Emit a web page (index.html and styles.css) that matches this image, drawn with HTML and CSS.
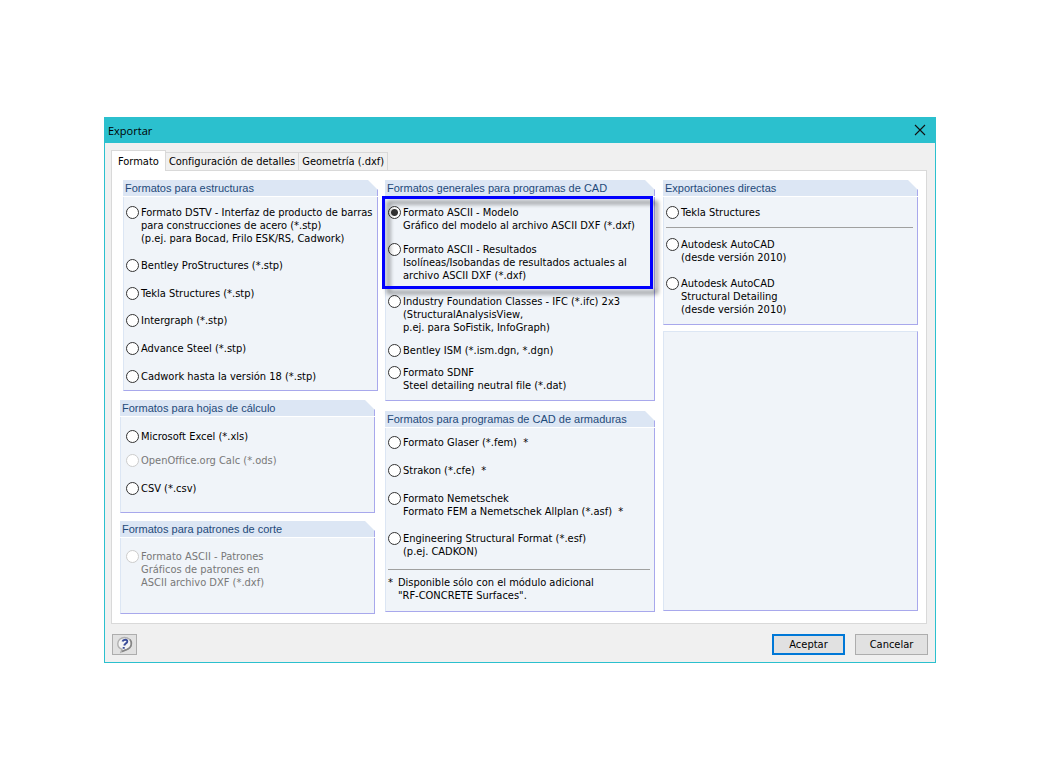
FILE: index.html
```html
<!DOCTYPE html>
<html lang="es">
<head>
    <meta charset="UTF-8">
    <meta name="viewport" content="width=device-width, initial-scale=1.0">
    <title>Exportar</title>
    <link rel="stylesheet" href="styles.css">
</head>
<body>
    <div class="window">
        <div class="title-bar">
            <h1>Exportar</h1>
            <button type="button" class="close" aria-label="Cerrar">
                <svg width="12" height="12" viewBox="0 0 12 12"><path d="M1 1L11 11M11 1L1 11" stroke="#111" stroke-width="1.1" fill="none"/></svg>
            </button>
        </div>

        <div class="tabs">
            <button type="button" class="tab active">Formato</button>
            <button type="button" class="tab">Configuración de detalles</button>
            <button type="button" class="tab">Geometría (.dxf)</button>
        </div>

        <form class="panel" id="export-form">
            <div class="column">
                <section class="group structures">
                    <h2>Formatos para estructuras</h2>
                    <div class="group-body">
                        <label class="option medium"><input type="radio" name="format"><span>Formato DSTV - Interfaz de producto de barras<br>para construcciones de acero (*.stp)<br>(p.ej. para Bocad, Frilo ESK/RS, Cadwork)</span></label>
                        <label class="option"><input type="radio" name="format"><span>Bentley ProStructures (*.stp)</span></label>
                        <label class="option medium"><input type="radio" name="format"><span>Tekla Structures (*.stp)</span></label>
                        <label class="option"><input type="radio" name="format"><span>Intergraph (*.stp)</span></label>
                        <label class="option"><input type="radio" name="format"><span>Advance Steel (*.stp)</span></label>
                        <label class="option"><input type="radio" name="format"><span>Cadwork hasta la versión 18 (*.stp)</span></label>
                    </div>
                </section>

                <section class="group sheets">
                    <h2>Formatos para hojas de cálculo</h2>
                    <div class="group-body">
                        <label class="option short"><input type="radio" name="format"><span>Microsoft Excel (*.xls)</span></label>
                        <label class="option disabled"><input type="radio" name="format" disabled><span>OpenOffice.org Calc (*.ods)</span></label>
                        <label class="option"><input type="radio" name="format"><span>CSV (*.csv)</span></label>
                    </div>
                </section>

                <section class="group patterns">
                    <h2>Formatos para patrones de corte</h2>
                    <div class="group-body">
                        <label class="option disabled"><input type="radio" name="format" disabled><span>Formato ASCII - Patrones<br>Gráficos de patrones en<br>ASCII archivo DXF (*.dxf)</span></label>
                    </div>
                </section>
            </div>

            <div class="column">
                <section class="group cad">
                    <h2>Formatos generales para programas de CAD</h2>
                    <div class="group-body">
                        <div class="highlight">
                            <label class="option short"><input type="radio" name="format" checked><span>Formato ASCII - Modelo<br>Gráfico del modelo al archivo ASCII DXF (*.dxf)</span></label>
                            <label class="option"><input type="radio" name="format"><span>Formato ASCII - Resultados<br>Isolíneas/Isobandas de resultados actuales al<br>archivo ASCII DXF (*.dxf)</span></label>
                        </div>
                        <label class="option short"><input type="radio" name="format"><span>Industry Foundation Classes - IFC (*.ifc) 2x3<br>(StructuralAnalysisView,<br>p.ej. para SoFistik, InfoGraph)</span></label>
                        <label class="option tight"><input type="radio" name="format"><span>Bentley ISM (*.ism.dgn, *.dgn)</span></label>
                        <label class="option"><input type="radio" name="format"><span>Formato SDNF<br>Steel detailing neutral file (*.dat)</span></label>
                    </div>
                </section>

                <section class="group rebar">
                    <h2>Formatos para programas de CAD de armaduras</h2>
                    <div class="group-body">
                        <label class="option"><input type="radio" name="format"><span>Formato Glaser (*.fem) &nbsp;*</span></label>
                        <label class="option"><input type="radio" name="format"><span>Strakon (*.cfe) &nbsp;*</span></label>
                        <label class="option medium"><input type="radio" name="format"><span>Formato Nemetschek<br>Formato FEM a Nemetschek Allplan (*.asf) &nbsp;*</span></label>
                        <label class="option short"><input type="radio" name="format"><span>Engineering Structural Format (*.esf)<br>(p.ej. CADKON)</span></label>
                        <hr>
                        <p class="note"><span>*</span><span>Disponible sólo con el módulo adicional<br>"RF-CONCRETE Surfaces".</span></p>
                    </div>
                </section>
            </div>

            <div class="column">
                <section class="group direct">
                    <h2>Exportaciones directas</h2>
                    <div class="group-body">
                        <label class="option"><input type="radio" name="format"><span>Tekla Structures</span></label>
                        <hr>
                        <label class="option"><input type="radio" name="format"><span>Autodesk AutoCAD<br>(desde versión 2010)</span></label>
                        <label class="option"><input type="radio" name="format"><span>Autodesk AutoCAD<br>Structural Detailing<br>(desde versión 2010)</span></label>
                    </div>
                </section>
                <div class="group-body empty"></div>
            </div>
        </form>

        <div class="footer">
            <button type="button" class="btn help" aria-label="Ayuda">
                <svg width="18" height="18" viewBox="0 0 18 18">
                    <path d="M8.500 1.500C12.500 1.500 15.500 4 15.500 7.500S13 13.500 9.500 13.800L5 16L6 13.300C3.400 12.500 1.800 10.300 1.800 7.800C1.800 4.200 4.800 1.500 8.500 1.500Z" fill="#f4f4f4" stroke="#b0b0b0" stroke-width="1.4"/>
                    <path d="M14 3.500C16.500 6.500 15.800 11.500 11 13.600L6 15.500" fill="none" stroke="#858585" stroke-width="1.6"/>
                    <path d="M6.500 5.500C7.200 3 11.700 3 11.200 5.700C10.800 7.500 8.700 7.500 8.200 9.500M7.700 11V12.800" fill="none" stroke="#3a4c98" stroke-width="2"/>
                </svg>
            </button>
            <button type="submit" form="export-form" class="btn primary">Aceptar</button>
            <button type="button" class="btn">Cancelar</button>
        </div>
    </div>
</body>
</html>
```
FILE: styles.css
```css
* {
    box-sizing: border-box;
}
body {
    margin: 0;
    background-color: #fff;
    color: #000;
    font-family: "DejaVu Sans Condensed", Tahoma, sans-serif;
    font-size: 11px;
    line-height: 13px;
}
button {
    padding: 0;
    font: inherit;
    color: inherit;
}
.window {
    width: 80%;
    min-width: 832px;
    margin: 117px auto;
    background-color: #f0f0f0;
    border: 1px solid #2bc0ce;
}
.title-bar {
    display: flex;
    justify-content: space-between;
    align-items: center;
    height: 25px;
    padding: 0 9px 1px 3px;
    background-color: #2bc0ce;
}
.title-bar h1 {
    margin: 0;
    font-family: "Open Sans", sans-serif;
    font-size: 11px;
    font-weight: normal;
}
.close {
    display: flex;
    border: none;
    background: none;
}
.tabs {
    display: flex;
    align-items: flex-end;
    height: 27px;
    padding-left: 6px;
}
.tab {
    height: 18px;
    padding: 0 3px;
    border: 1px solid #d9d9d9;
    border-left: none;
    border-bottom: none;
    background-color: #f0f0f0;
}
.tab.active {
    position: relative;
    height: 21px;
    padding: 0 6px;
    margin-bottom: -1px;
    border-left: 1px solid #d9d9d9;
    background-color: #fff;
}
.panel {
    display: grid;
    grid-template-columns: 257fr 270fr 255fr;
    gap: 8px;
    margin: 0 8px 0 6px;
    padding: 9px 8px;
    border: 1px solid #d9d9d9;
    background-color: #fff;
}
.column {
    display: flex;
    flex-direction: column;
    gap: 8px;
}
.group h2 {
    height: 16px;
    margin: 0 0 1px;
    padding: 0 2px;
    font-family: "Liberation Sans", Arial, sans-serif;
    font-size: 11px;
    font-weight: normal;
    line-height: 16px;
    color: #1f4a7a;
    background-color: #dce6f4;
    border-right: 1px solid #a8a8ec;
    clip-path: polygon(0 0, calc(100% - 10px) 0, 100% 10px, 100% 100%, 0 100%);
}
.group-body {
    padding: 9px 4px 8px 2px;
    background-color: #f0f4f9;
    border: 1px solid #a8a8ec;
    border-top: none;
    border-left-color: #dce6f4;
}
.structures {
    margin-left: 3px;
    margin-right: -1px;
}
.structures .group-body {
    padding-bottom: 7px;
}
.sheets,
.patterns {
    margin-right: 2px;
}
.sheets {
    margin-top: 1px;
}
.sheets .group-body {
    padding: 13px 4px 17px 5px;
}
.patterns .group-body {
    padding: 12px 4px 24px 5px;
}
.cad {
    margin-bottom: 2px;
}
.rebar .group-body {
    padding-top: 8px;
    padding-bottom: 9px;
}
.direct {
    margin-bottom: -2px;
}
.empty {
    flex: 1;
    margin-bottom: 3px;
    border-top: 1px solid #dce6f4;
}
.option {
    display: flex;
    gap: 2px;
    margin-bottom: 15px;
    white-space: nowrap;
}
.option.medium {
    margin-bottom: 14px;
}
.option.short {
    margin-bottom: 11px;
}
.option.tight {
    margin-bottom: 9px;
}
.option:last-child {
    margin-bottom: 0;
}
.option input {
    flex: none;
    appearance: none;
    width: 13px;
    height: 13px;
    margin: 0;
    border: 1px solid #333;
    border-radius: 50%;
    background-color: #fff;
}
.option input:checked {
    background-image: radial-gradient(circle, #333 3px, #fff 4px);
}
.option.disabled {
    color: #787878;
}
.option.disabled input {
    border-color: #ccc;
}
.highlight {
    position: relative;
    margin-bottom: 13px;
}
.highlight::after {
    content: '';
    position: absolute;
    inset: -10px -3px -7px -6px;
    border: 3px solid #0000ff;
    filter: drop-shadow(5px 5px 2px rgba(0, 0, 0, 0.45));
    pointer-events: none;
}
.highlight + .option {
    margin-bottom: 10px;
}
hr {
    height: 1px;
    margin: 0;
    border: none;
    background-color: #a0a0a0;
}
.direct hr {
    margin: -7px 0 10px;
}
.direct .option:nth-of-type(2) {
    margin-bottom: 13px;
}
.note {
    display: flex;
    gap: 5px;
    margin: 6px 0 0;
    white-space: nowrap;
}
.footer {
    display: flex;
    gap: 10px;
    padding: 10px 7px 7px;
}
.btn {
    width: 73px;
    height: 21px;
    border: 1px solid #adadad;
    background-color: #e1e1e1;
}
.btn.primary {
    border: 2px solid #0078d7;
}
.btn.help {
    display: flex;
    align-items: center;
    justify-content: center;
    width: 25px;
    margin-right: auto;
}
```
